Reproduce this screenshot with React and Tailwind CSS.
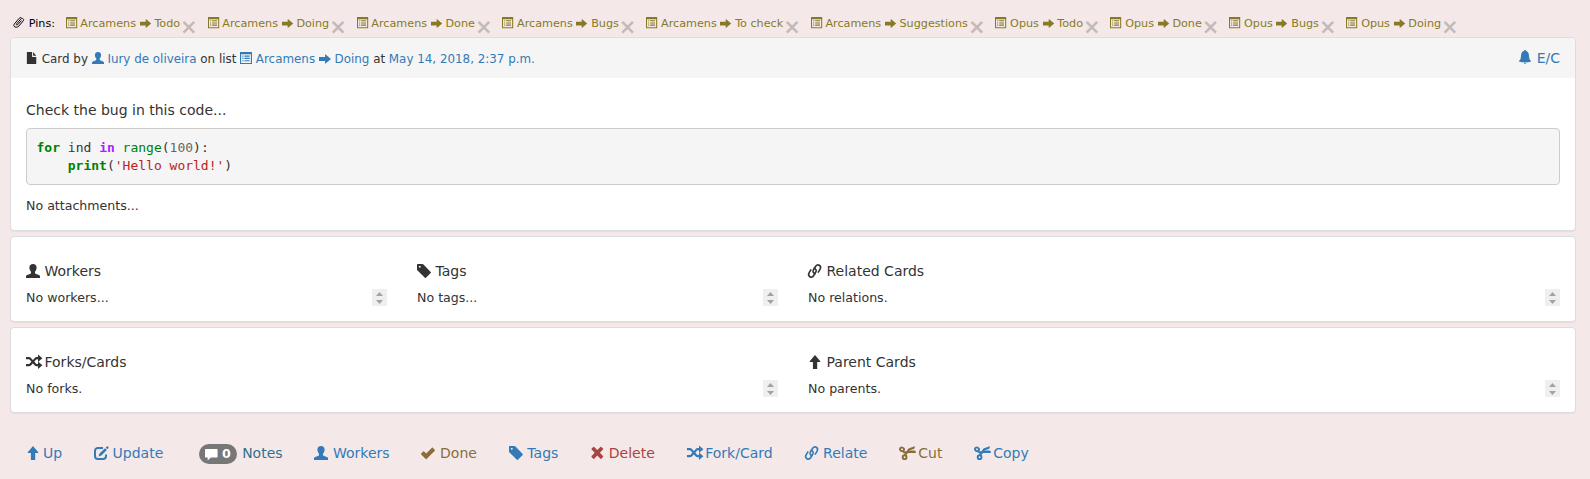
const shapes = {
  user: (
    <path d="M7 0c2.200 0 3.600 1.300 3.600 3.600 0 1.700-.6 3.200-1.600 4.100v1c0 .7.4 1 1.100 1.300l2.800 1.100c.7.3 1.100.8 1.100 1.500V14H0v-1.400c0-.7.4-1.200 1.100-1.500L3.900 10c.7-.3 1.100-.6 1.100-1.300v-1C4 6.800 3.400 5.300 3.400 3.600 3.400 1.300 4.800 0 7 0z" />
  ),
  tag: (
    <path fillRule="evenodd" d="M.6 0h4.800c.4 0 .8.2 1.100.5l7.200 7.400c.3.300.3.800 0 1.100l-4.800 4.800c-.3.300-.7.300-1 0L.500 6.500A1.600 1.600 0 0 1 0 5.400V.6C0 .3.3 0 .6 0zM1.900 1.900v1.700h1.700V1.900z" />
  ),
  link: (
    <g fill="none" stroke="currentColor" strokeWidth="1.600">
      <path d="M7.600 9.700C5.400 9.600 4.300 7.700 5.400 6L7.500 2.500C8.400.9 10 .5 11.300 1.300c1.300.8 1.600 2.500.7 4L10 8.600" />
      <path d="M5.600 4.300C7.800 4.400 8.900 6.300 7.800 8L5.700 11.500C4.800 13.100 3.200 13.500 1.900 12.700.6 11.900.3 10.200 1.200 8.700L3.200 5.400" />
    </g>
  ),
  random: (
    <g>
      <path d="M0 3.200h2.800c.8 0 1.300.3 1.800.9l4.500 5.200c.5.600 1 .9 1.800.9h1.800" fill="none" stroke="currentColor" strokeWidth="2.200" />
      <path d="M0 10.200h2.800c.8 0 1.300-.3 1.800-.9l4.500-5.200c.5-.6 1-.9 1.800-.9h1.800" fill="none" stroke="currentColor" strokeWidth="2.200" />
      <path d="M12-.6l4.400 3.800L12 7zM12 6.400l4.400 3.800L12 14z" />
    </g>
  ),
  up: <path d="M7 0l5.300 6.200c.2.300.1.700-.3.700H9.200V14H4.900V6.900H2c-.4 0-.5-.4-.3-.7z" />,
  right: <path d="M14 7l-6.300 5.300c-.3.200-.6.100-.6-.3V9.300H0V4.800h7.100V2c0-.4.3-.5.6-.3z" />,
  list: (
    <g>
      <path fillRule="evenodd" d="M0 0h14v14H0zM1.300 2.700v10h11.400v-10z" />
      <path d="M2.700 4.100H4v1.300H2.700zM5.200 4.100h6.100v1.300H5.200zM2.700 6.800H4v1.300H2.700zM5.200 6.800h6.100v1.300H5.200zM2.700 9.500H4v1.300H2.700zM5.200 9.500h6.100v1.300H5.200z" />
    </g>
  ),
  file: <path d="M1.500 0h5.600v5.300c0 .4.200.6.600.6H12v7.600c0 .300-.2.500-.5.500h-10c-.3 0-.5-.2-.5-.5V.5c0-.3.200-.5.500-.5zM8.300 0L12 4.400H8.300z" />,
  clip: (
    <path
      d="M10.800 4.400L5.800 9.700c-.9.900-2.200-.1-1.300-1.200l5.300-5.900c1.800-2 4.700.1 3 2.300L7.500 11.200C4.600 14.500-.8 12.400 1.700 8.700L7.800 1.600C8.500.8 9.600.5 10.500.8"
      fill="none"
      stroke="currentColor"
      strokeWidth="1.200"
    />
  ),
  bell: (
    <path d="M7 0c.6 0 1 .4 1.100 1C9.700 1.500 10.600 2.800 10.800 4.600l.5 3.700c.2 1 .6 1.500 1.300 2.100.6.500.4 1.200-.2 1.300-1.500.4-3.300.7-5.400.7s-3.900-.3-5.400-.7c-.6-.1-.8-.8-.2-1.300.7-.6 1.100-1.100 1.300-2.100l.5-3.700C3.400 2.800 4.300 1.500 5.900 1 6 .4 6.400 0 7 0zM6.100 12.900h1.800c0 .7-.3 1.100-.9 1.100s-.9-.4-.9-1.100z" />
  ),
  edit: (
    <g>
      <path d="M9 1.900H3.900C2.400 1.900 1 3.200 1 4.800v5.300C1 11.700 2.300 13 3.900 13h5.200c1.600 0 2.900-1.300 2.900-2.900V8.500" fill="none" stroke="currentColor" strokeWidth="2" />
      <path d="M11 2.200l1.900 1.900-5.500 5.300-2.900 1 1-2.900zM11.700 1.500L12.900.400c.3-.3.600-.3.900 0l.6.600c.3.300.3.600 0 .9l-1 1.300z" />
    </g>
  ),
  comment: <path d="M.7 1h12.600c.4 0 .7.300.7.700v8.100c0 .4-.3.700-.7.700H6.500L3 14V10.500H.7c-.4 0-.7-.3-.7-.7V1.700c0-.4.300-.7.700-.7z" />,
  ok: <path d="M.2 7.600l2-2.100c.3-.3.600-.3.900 0l2.100 2.100 5.700-5.800c.3-.3.600-.3.900 0l2 2.100c.3.300.3.600 0 .9l-8.200 8.200c-.3.300-.6.300-.9 0L.2 8.500c-.3-.3-.3-.6 0-.9z" />,
  remove: <path transform="translate(.8 0)" d="M3.400.9L6.500 4 9.600.9c.3-.3.600-.3.900 0l1.700 1.700c.3.300.3.600 0 .9L9.100 6.800l3.100 3.300c.3.300.3.600 0 .9l-1.700 1.700c-.3.300-.6.300-.9 0L6.500 9.600l-3.100 3.100c-.3.300-.6.300-.9 0L.8 11c-.3-.3-.3-.6 0-.9l3.100-3.300L.8 3.500c-.3-.3-.3-.6 0-.9L2.500.9c.3-.3.6-.3.900 0z" />,
  scissors: (
    <g transform="translate(.3 0)">
      <g fill="none" stroke="currentColor" strokeWidth="1.900">
        <ellipse cx="2.700" cy="3.300" rx="2.100" ry="1.700" transform="rotate(25 2.700 3.300)" />
        <circle cx="5.300" cy="11.200" r="1.900" />
      </g>
      <path d="M4 5.300l3.200-.1L9.200 2.600 14.600.4c.5-.2 1.100.2.900.7L15 2.800 9.700 4.500h5.800l1.100 1.200c.3.400 0 1.100-.6 1.200H9.200L7.400 8l-.3 2.100-2.200-.5.400-2.300-1.800-.5z" />
    </g>
  ),
};

function Icon({ name, className = "size-3.5" }) {
  return (
    <svg viewBox="0 0 14 14" fill="currentColor" overflow="visible" className={`shrink-0 ${className}`} aria-hidden="true">
      {shapes[name]}
    </svg>
  );
}

const pins = [
  ["Arcamens", "Todo"],
  ["Arcamens", "Doing"],
  ["Arcamens", "Done"],
  ["Arcamens", "Bugs"],
  ["Arcamens", "To check"],
  ["Arcamens", "Suggestions"],
  ["Opus", "Todo"],
  ["Opus", "Done"],
  ["Opus", "Bugs"],
  ["Opus", "Doing"],
];

const actions = [
  { icon: "up", label: "Up", tone: "text-[#337ab7]", slot: "w-[17px]" },
  { icon: "edit", label: "Update", tone: "text-[#337ab7]" },
  { badge: "0", label: "Notes", tone: "text-[#31708f]" },
  { icon: "user", label: "Workers", tone: "text-[#337ab7]" },
  { icon: "ok", label: "Done", tone: "text-[#8a6d3b]" },
  { icon: "tag", label: "Tags", tone: "text-[#337ab7]" },
  { icon: "remove", label: "Delete", tone: "text-[#a94442]" },
  { icon: "random", label: "Fork/Card", tone: "text-[#337ab7]" },
  { icon: "link", label: "Relate", tone: "text-[#337ab7]" },
  { icon: "scissors", label: "Cut", tone: "text-[#8a6d3b]", slot: "w-[19px]" },
  { icon: "scissors", label: "Copy", tone: "text-[#337ab7]", slot: "w-[19px]" },
];

function Pin({ board, list }) {
  return (
    <a className="flex items-center whitespace-nowrap text-[#877a26]">
      <Icon name="list" className="mr-[3.6px] mb-[2px] size-[11.2px]" />
      <span>{board}</span>
      <Icon name="right" className="mx-[3.6px] mb-px size-[11.2px]" />
      <span>{list}</span>
      <span className="mt-[5px] text-[21px] leading-[18px] font-bold text-black opacity-20">×</span>
    </a>
  );
}

function Panel({ className, children }) {
  return (
    <section className={`overflow-hidden rounded-[4px] border border-[#ddd] bg-white shadow-[0_1px_1px_rgba(0,0,0,0.05)] ${className}`}>
      {children}
    </section>
  );
}

function Spinner() {
  return (
    <span className="flex h-[17px] w-[15px] flex-col items-center justify-between bg-[#efefef] pt-[3px] pb-[2px] text-[#a3a3a3]">
      <svg viewBox="0 0 7 4" fill="currentColor" className="h-1 w-[7px]"><path d="M3.500 0L7 4H0z" /></svg>
      <svg viewBox="0 0 7 4" fill="currentColor" className="h-1 w-[7px]"><path d="M0 0h7L3.500 4z" /></svg>
    </span>
  );
}

function Relation({ icon, title, empty, span }) {
  return (
    <div className={`px-[15px] ${span}`}>
      <h4 className="flex h-5 items-center text-sm leading-5">
        <span className="flex w-[18.5px] pb-px"><Icon name={icon} /></span>
        {title}
      </h4>
      <div className="mt-[7px] flex h-[19px] items-center justify-between">
        <span className="text-[12.6px] leading-[18px]">{empty}</span>
        <Spinner />
      </div>
    </div>
  );
}

export default function App() {
  return (
    <main className="h-[479px] w-[1590px] overflow-hidden bg-[#f4e9e8] pr-[14px] pl-[10px] font-['DejaVu_Sans',sans-serif] text-[#333]">
      <nav className="flex h-[37px] items-center pt-[11px] pl-[3px] text-[11.2px] leading-4">
        <span className="mr-[10.5px] flex items-center text-black">
          <Icon name="clip" className="mr-[4.500px] mb-[2px] size-[11.2px]" />
          Pins:
        </span>
        <div className="flex gap-[9.8px]">
          {pins.map(([board, list]) => <Pin key={board + list} board={board} list={list} />)}
        </div>
      </nav>

      <Panel className="h-[194px]">
        <header className="flex h-10 items-center justify-between bg-[#f5f5f5] px-[15px]">
          <div className="flex items-center gap-[3.75px] pt-[2px] text-[11.9px] leading-[17px]">
            <Icon name="file" className="mb-[2px] size-3" />
            <span>Card by</span>
            <span className="flex items-center gap-[3.75px] text-[#337ab7]">
              <Icon name="user" className="mb-[2px] size-3" />
              Iury de oliveira
            </span>
            <span>on list</span>
            <span className="flex items-center gap-[3.75px] text-[#337ab7]">
              <Icon name="list" className="mb-[2px] size-3" />
              Arcamens
              <Icon name="right" className="mb-px size-3" />
              Doing
            </span>
            <span>at</span>
            <span className="text-[#337ab7]">May 14, 2018, 2:37 p.m.</span>
          </div>
          <a className="flex items-center gap-[4.500px] text-sm leading-5 text-[#337ab7]">
            <Icon name="bell" className="mb-[2px] size-3.5" />
            E/C
          </a>
        </header>
        <div className="px-[15px] pt-[22px]">
          <p className="text-sm leading-5">Check the bug in this code...</p>
          <pre className="mt-2 h-[57px] rounded-[4px] border border-[#ccc] bg-[#f5f5f5] px-[9.500px] pt-[10px] font-['DejaVu_Sans_Mono',monospace] text-[13px] leading-[18px]">
            <div>
              <b className="text-[#008000]">for</b>{" ind "}<b className="text-[#aa22ff]">in</b>{" "}<span className="text-[#008000]">range</span>(<span className="text-[#666]">100</span>):
            </div>
            <div className="pl-[4ch]">
              <b className="text-[#008000]">print</b>(<span className="text-[#ba2121]">'Hello world!'</span>)
            </div>
          </pre>
          <p className="mt-3 text-[12.600px] leading-[18px]">No attachments...</p>
        </div>
      </Panel>

      <Panel className="mt-[5px] grid h-[86px] grid-cols-4 pt-6">
        <Relation icon="user" title="Workers" empty="No workers..." span="col-span-1" />
        <Relation icon="tag" title="Tags" empty="No tags..." span="col-span-1" />
        <Relation icon="link" title="Related Cards" empty="No relations." span="col-span-2" />
      </Panel>

      <Panel className="mt-[5px] grid h-[86px] grid-cols-2 pt-6">
        <Relation icon="random" title="Forks/Cards" empty="No forks." span="col-span-1" />
        <Relation icon="up" title="Parent Cards" empty="No parents." span="col-span-1" />
      </Panel>

      <footer className="mt-[30px] flex h-5 items-center gap-[31.85px] pl-4 text-sm leading-5">
        {actions.map(({ icon, badge, label, tone, slot = "w-[18.6px]" }) => (
          <a key={label} className={`flex items-center whitespace-nowrap ${tone}`}>
            {badge ? (
              <span className="mt-0.5 mr-[5px] ml-1 flex h-5 w-[38px] items-center justify-center gap-1 rounded-[10px] bg-[#777] text-[12.6px] font-bold text-white">
                <Icon name="comment" className="size-[12.600px]" />
                {badge}
              </span>
            ) : (
              <span className={`flex pb-px ${slot}`}><Icon name={icon} /></span>
            )}
            {label}
          </a>
        ))}
      </footer>
    </main>
  );
}
